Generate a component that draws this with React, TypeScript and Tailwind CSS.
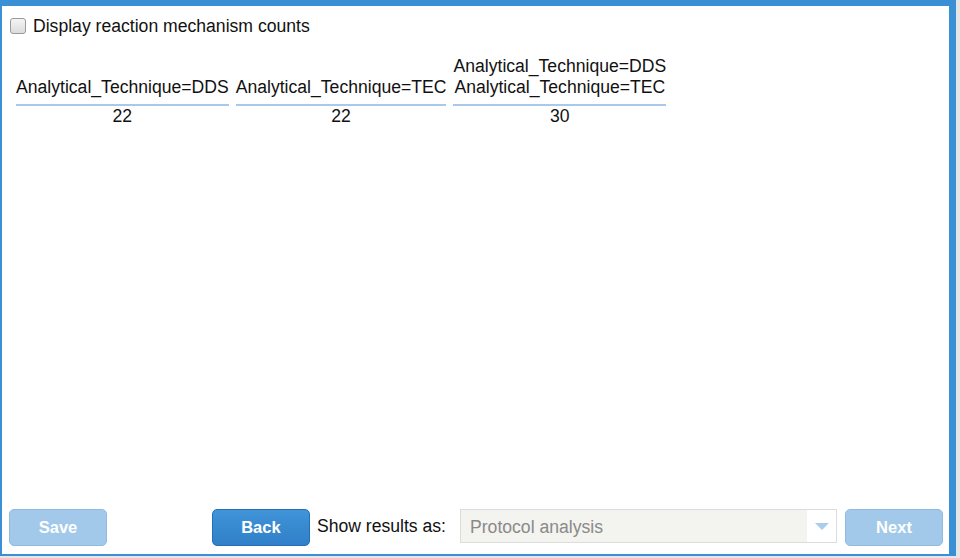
import React from "react";

const font = { fontFamily: '"Liberation Sans", Arial, sans-serif' };

function Col({ header, value }: { header: string[]; value: string }) {
  return (
    <div className="flex flex-col">
      <div className="flex flex-col justify-end items-center pb-[6px] border-b-2 border-[#a9c9ec] flex-1">
        {header.map((h, i) => (
          <div key={i} className="leading-[21px] whitespace-nowrap">{h}</div>
        ))}
      </div>
      <div className="text-center leading-[21px]">{value}</div>
    </div>
  );
}

export default function App() {
  return (
    <div className="w-[960px] h-[558px] bg-[#e6e6e6] overflow-hidden text-[17.6px] text-[#111]" style={font}>
      <div className="w-[956px] h-[556px] border-t-[6px] border-l-2 border-r-[7px] border-b-2 border-[#3a8fd5] bg-white flex flex-col">
        <div className="flex items-center pl-[8px] pt-[8px] h-[24px] box-content">
          <div className="w-[16px] h-[16px] rounded-[3px] border border-[#9a9a9a] bg-gradient-to-b from-[#f4f4f4] to-[#dcdcdc]" />
          <span className="ml-[7px] leading-[20px]">Display reaction mechanism counts</span>
        </div>
        <div className="flex gap-[7px] pl-[14px] mt-[18px] items-stretch">
          <Col header={["Analytical_Technique=DDS"]} value="22" />
          <Col header={["Analytical_Technique=TEC"]} value="22" />
          <Col header={["Analytical_Technique=DDS", "Analytical_Technique=TEC"]} value="30" />
        </div>
        <div className="flex-1" />
        <div className="flex items-start justify-between pl-[7px] pr-[6px] pb-[8px]">
          <button className="w-[98px] h-[37px] rounded-[5px] bg-[#a2c9ea] border border-[#8fbbe3] text-white font-bold text-[16.5px]">Save</button>
          <div className="flex items-start">
            <button className="w-[98px] h-[37px] rounded-[5px] bg-gradient-to-b from-[#4194d8] to-[#2f80c8] border border-[#2470b6] text-white font-bold text-[16.5px]">Back</button>
            <span className="ml-[7px] mr-[14px] leading-[34px] text-[#111]">Show results as:</span>
            <div className="w-[377px] h-[34px] border border-[#dcdcdc] flex">
              <div className="flex-1 bg-[#f3f3ef] text-[#8a8a8a] pl-[9px] leading-[34px]">Protocol analysis</div>
              <div className="w-[29px] bg-white flex items-center justify-center">
                <svg width="14" height="7" viewBox="0 0 14 7"><polygon points="0,0 14,0 7,7" fill="#a9cdee" /></svg>
              </div>
            </div>
            <button className="ml-[8px] w-[98px] h-[37px] rounded-[5px] bg-[#a2c9ea] border border-[#8fbbe3] text-white font-bold text-[16.5px]">Next</button>
          </div>
        </div>
      </div>
    </div>
  );
}
